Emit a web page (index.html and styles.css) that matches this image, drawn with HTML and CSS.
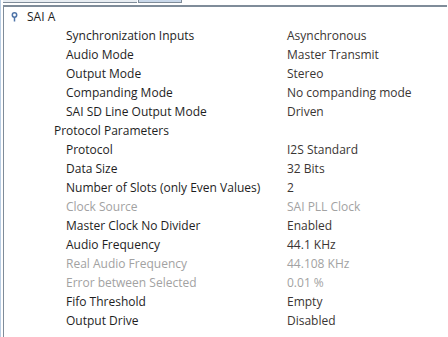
FILE: index.html
```html
<!DOCTYPE html>
<html lang="en">
<head>
    <meta charset="UTF-8">
    <title>SAI A</title>
    <link rel="stylesheet" href="styles.css">
</head>
<body>
    <div class="tabs">
        <div class="tab"></div>
        <div class="tab active"></div>
    </div>
    <div class="panel">
        <div class="row root">
            <span class="pin">
                <svg width="7" height="10" viewBox="0 0 7 10">
                    <circle cx="3.5" cy="3" r="2.2" fill="none" stroke="#4f74a8" stroke-width="1.5"/>
                    <line x1="3.5" y1="5" x2="3.5" y2="9.5" stroke="#4f74a8" stroke-width="1.5"/>
                </svg>
            </span>
            <span class="label">SAI A</span>
        </div>
        <div class="row item"><span class="label">Synchronization Inputs</span><span class="value">Asynchronous</span></div>
        <div class="row item"><span class="label">Audio Mode</span><span class="value">Master Transmit</span></div>
        <div class="row item"><span class="label">Output Mode</span><span class="value">Stereo</span></div>
        <div class="row item"><span class="label">Companding Mode</span><span class="value">No companding mode</span></div>
        <div class="row item"><span class="label">SAI SD Line Output Mode</span><span class="value">Driven</span></div>
        <div class="row group"><span class="label">Protocol Parameters</span></div>
        <div class="row item"><span class="label">Protocol</span><span class="value">I2S Standard</span></div>
        <div class="row item"><span class="label">Data Size</span><span class="value">32 Bits</span></div>
        <div class="row item"><span class="label">Number of Slots (only Even Values)</span><span class="value">2</span></div>
        <div class="row item disabled"><span class="label">Clock Source</span><span class="value">SAI PLL Clock</span></div>
        <div class="row item"><span class="label">Master Clock No Divider</span><span class="value">Enabled</span></div>
        <div class="row item"><span class="label">Audio Frequency</span><span class="value">44.1 KHz</span></div>
        <div class="row item disabled"><span class="label">Real Audio Frequency</span><span class="value">44.108 KHz</span></div>
        <div class="row item disabled"><span class="label">Error between Selected</span><span class="value">0.01 %</span></div>
        <div class="row item"><span class="label">Fifo Threshold</span><span class="value">Empty</span></div>
        <div class="row item"><span class="label">Output Drive</span><span class="value">Disabled</span></div>
    </div>
</body>
</html>
```

FILE: styles.css
```css
:root {
    --border: #7f8c99;
    --edge: #b9cde3;
    --label: #1e1e1e;
    --value: #3a3533;
    --muted: #a2a2a2;
}

html, body {
    margin: 0;
    height: 100%;
    overflow: hidden;
}

body {
    background: #ffffff;
    font-family: "Open Sans", "Noto Sans", sans-serif;
    font-size: 12px;
    color: var(--label);
    border-left: 1px solid var(--edge);
    box-sizing: border-box;
}

.tabs {
    display: flex;
    height: 3px;
    padding-left: 2px;
}

.tab {
    width: 134px;
    background: #e8edf2;
    border-bottom: 1px solid var(--border);
    box-sizing: border-box;
}

.tab.active {
    width: 44px;
    margin-left: 1px;
    background: #c9d8ea;
    border: 1px solid var(--border);
    border-top: none;
}

.panel {
    margin: 2px 1px 0 2px;
    border-top: 2px solid var(--border);
    border-left: 1px solid var(--border);
    height: 100%;
}

.row {
    display: flex;
    height: 19px;
    line-height: 19px;
    white-space: nowrap;
}

.root {
    padding-left: 7px;
}

.pin {
    width: 16px;
    display: flex;
    align-items: center;
    padding-top: 1px;
}

.group {
    padding-left: 50px;
}

.item .label {
    width: 221px;
    padding-left: 62px;
}

.item .value {
    color: var(--value);
}

.disabled .label,
.disabled .value {
    color: var(--muted);
}
```
